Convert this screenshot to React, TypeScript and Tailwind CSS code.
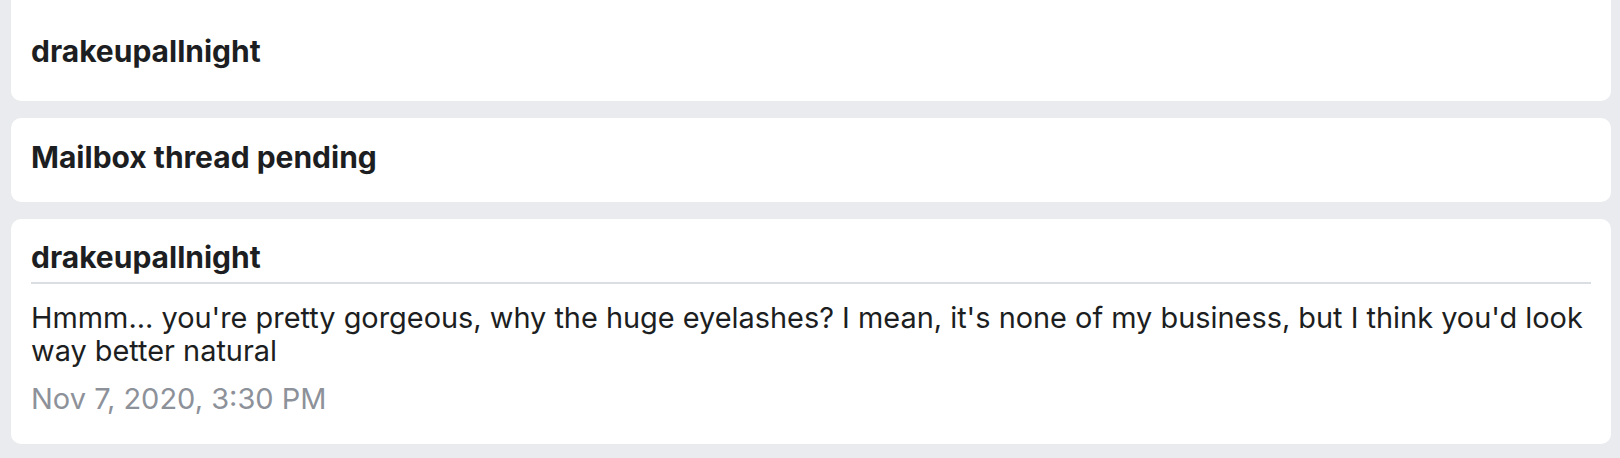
export default function App() {
  const font = { fontFamily: 'Inter, "Noto Sans", sans-serif' };
  return (
    <div className="h-[458px] w-[1620px] overflow-hidden bg-[#e9ebee] pl-[11px] pr-[9px] flex flex-col gap-[17px] text-[#1c1e21]" style={font}>
      <div className="h-[101px] shrink-0 rounded-b-[10px] bg-white px-[20px] pt-[33px]">
        <div className="text-[30px] font-bold leading-[36px]">drakeupallnight</div>
      </div>
      <div className="h-[84px] shrink-0 rounded-[10px] bg-white px-[20px] flex items-center">
        <div className="text-[30px] font-bold leading-[36px] -mt-[6px]">Mailbox thread pending</div>
      </div>
      <div className="h-[225px] shrink-0 rounded-[10px] bg-white px-[20px] pt-[20px]">
        <div className="text-[30px] font-bold leading-[36px] pb-[7px] border-b-2 border-[#dadde1]">drakeupallnight</div>
        <div className="mt-[17px] text-[28.9px] leading-[33px]">
          Hmmm... you're pretty gorgeous, why the huge eyelashes? I mean, it's none of my business, but I think you'd look way better natural
        </div>
        <div className="mt-[15px] text-[29px] leading-[33px] text-[#8d9199]">Nov 7, 2020, 3:30 PM</div>
      </div>
    </div>
  );
}
